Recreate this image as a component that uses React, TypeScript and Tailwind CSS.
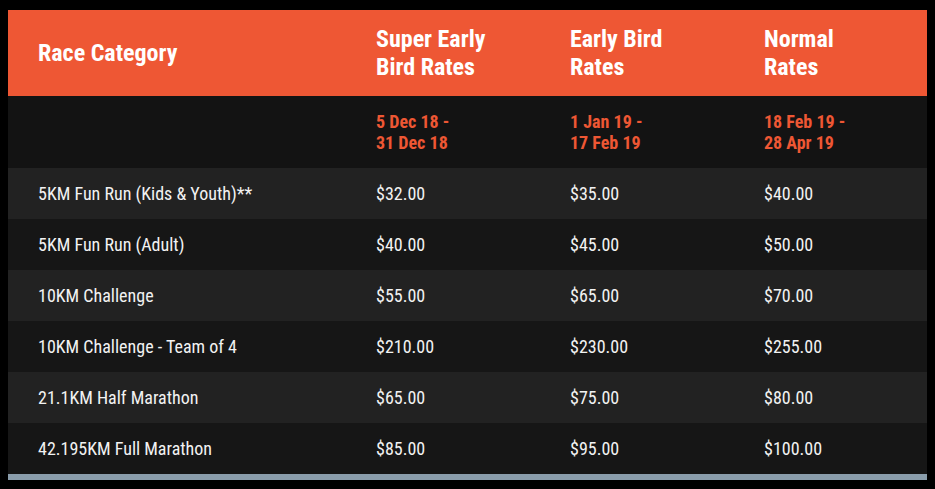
const rows = [
  ["5KM Fun Run (Kids & Youth)**", "$32.00", "$35.00", "$40.00"],
  ["5KM Fun Run (Adult)", "$40.00", "$45.00", "$50.00"],
  ["10KM Challenge", "$55.00", "$65.00", "$70.00"],
  ["10KM Challenge - Team of 4", "$210.00", "$230.00", "$255.00"],
  ["21.1KM Half Marathon", "$65.00", "$75.00", "$80.00"],
  ["42.195KM Full Marathon", "$85.00", "$95.00", "$100.00"],
];

const font = { fontFamily: '"Roboto Condensed", "Liberation Sans Narrow", "DejaVu Sans Condensed", sans-serif' };

export default function App() {
  return (
    <div className="min-h-[489px] w-[935px] bg-black pt-[10px] pl-[8px]" style={font}>
      <div className="w-[919px] border-b-[6px] border-[#8a9dab]">
        <table className="w-full border-collapse text-left">
          <colgroup>
            <col className="w-[338px]" />
            <col className="w-[194px]" />
            <col className="w-[194px]" />
            <col />
          </colgroup>
          <thead>
            <tr className="h-[86px] bg-[#ee5734] text-[24px] font-bold leading-[28px] text-white">
              <th className="pl-[30px] font-bold">Race Category</th>
              <th className="pl-[30px] font-bold">Super Early<br />Bird Rates</th>
              <th className="pl-[30px] font-bold">Early Bird<br />Rates</th>
              <th className="pl-[30px] font-bold">Normal<br />Rates</th>
            </tr>
          </thead>
          <tbody>
            <tr className="h-[72px] bg-[#131313] text-[18px] font-bold leading-[21px] text-[#ee5734]">
              <td />
              <td className="pl-[30px]">5 Dec 18 -<br />31 Dec 18</td>
              <td className="pl-[30px]">1 Jan 19 -<br />17 Feb 19</td>
              <td className="pl-[30px]">18 Feb 19 -<br />28 Apr 19</td>
            </tr>
            {rows.map((r, i) => (
              <tr
                key={r[0]}
                className={`h-[51px] text-[18px] text-[#f2f2f2] ${i % 2 === 0 ? "bg-[#222222]" : "bg-[#161616]"}`}
              >
                {r.map((c, j) => (
                  <td key={j} className="pl-[30px]">{c}</td>
                ))}
              </tr>
            ))}
          </tbody>
        </table>
      </div>
    </div>
  );
}
